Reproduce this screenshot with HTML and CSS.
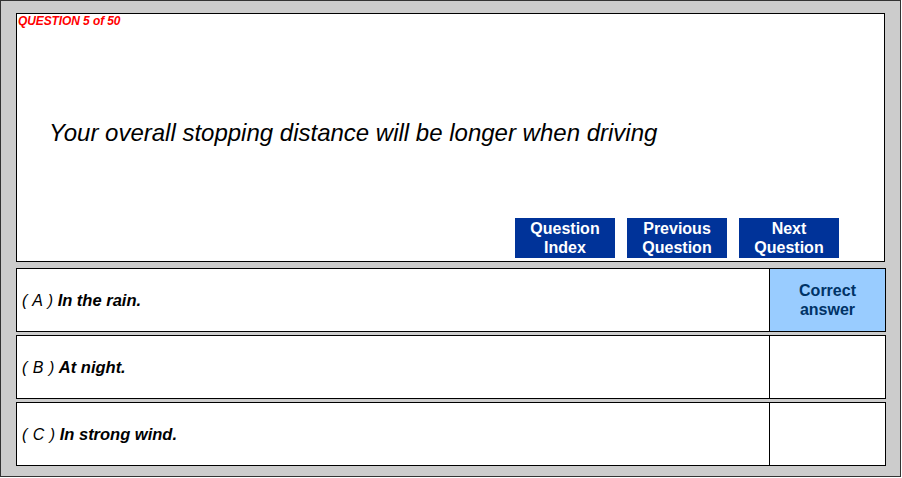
FILE: index.html
```html
<!DOCTYPE html>
<html>
<head>
<meta charset="utf-8">
<link rel="stylesheet" href="styles.css">
</head>
<body>
<div class="frame">
  <div class="question">
    <div class="qnum">QUESTION 5 of 50</div>
    <div class="qtext">Your overall stopping distance will be longer when driving</div>
    <div class="nav">
      <div class="btn">Question<br>Index</div>
      <div class="btn">Previous<br>Question</div>
      <div class="btn">Next<br>Question</div>
    </div>
  </div>
  <div class="answers">
    <div class="row">
      <div class="opt"><span><span class="letter">( A )</span> <b>In the rain.</b></span></div>
      <div class="mark correct">Correct<br>answer</div>
    </div>
    <div class="row">
      <div class="opt"><span><span class="letter">( B )</span> <b>At night.</b></span></div>
      <div class="mark"></div>
    </div>
    <div class="row">
      <div class="opt"><span><span class="letter">( C )</span> <b>In strong wind.</b></span></div>
      <div class="mark"></div>
    </div>
  </div>
</div>
</body>
</html>
```
FILE: styles.css
```css
html, body {
  margin: 0;
  padding: 0;
  background: #ffffff;
  font-family: "Liberation Sans", Arial, sans-serif;
}
.frame {
  box-sizing: border-box;
  width: 901px;
  height: 477px;
  background: #cccccc;
  border: 1px solid #333333;
  padding: 12px 0 0 15px;
  display: flex;
  flex-direction: column;
}
.question {
  box-sizing: border-box;
  width: 869px;
  height: 249px;
  background: #ffffff;
  border: 1px solid #000000;
  display: flex;
  flex-direction: column;
}
.qnum {
  color: #ff0000;
  font-weight: bold;
  font-style: italic;
  font-size: 12px;
  line-height: 15px;
  padding: 0 0 0 1px;
  letter-spacing: -0.1px;
}
.qtext {
  font-style: italic;
  font-size: 24px;
  line-height: 28px;
  color: #000000;
  padding: 90px 0 0 32px;
}
.nav {
  margin-top: auto;
  display: flex;
  justify-content: flex-end;
  gap: 12px;
  padding: 0 45px 3px 0;
}
.btn {
  width: 100px;
  height: 40px;
  box-sizing: border-box;
  background: #003399;
  color: #ffffff;
  font-weight: bold;
  font-size: 16px;
  line-height: 19px;
  text-align: center;
  padding-top: 1px;
}
.answers {
  display: flex;
  flex-direction: column;
  gap: 3px;
  margin-top: 6px;
}
.row {
  box-sizing: border-box;
  width: 870px;
  height: 64px;
  background: #ffffff;
  border: 1px solid #000000;
  display: flex;
}
.opt {
  flex: 1;
  display: flex;
  align-items: center;
  padding-left: 5px;
  font-size: 16.5px;
  font-style: italic;
  color: #000000;
}
.letter {
  font-weight: normal;
  font-size: 16px;
  word-spacing: 1px;
}
.opt b {
  font-weight: bold;
}
.mark {
  box-sizing: border-box;
  width: 116px;
  border-left: 1px solid #000000;
  display: flex;
  align-items: center;
  justify-content: center;
  text-align: center;
}
.mark.correct {
  background: #99ccff;
  color: #003366;
  font-weight: bold;
  font-size: 16px;
  line-height: 19px;
}
```
